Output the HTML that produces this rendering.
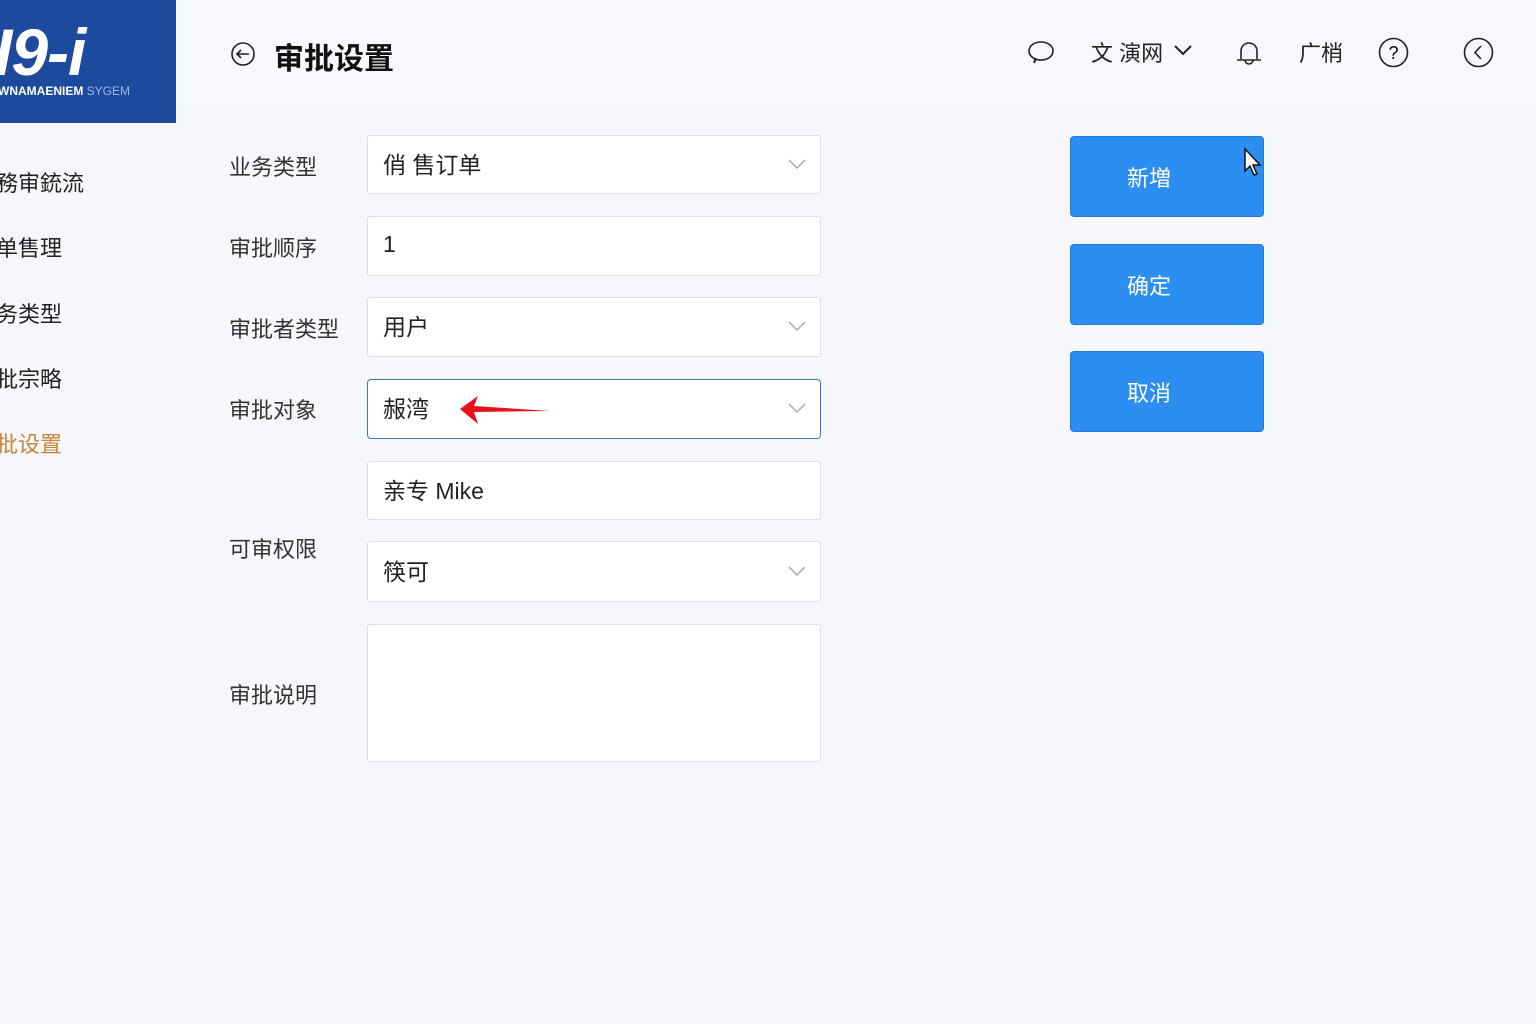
<!DOCTYPE html>
<html><head><meta charset="utf-8"><style>
body{margin:0;width:1536px;height:1024px;background:#f5f7fb;font-family:"Liberation Sans","Noto Sans CJK SC",sans-serif;position:relative;overflow:hidden;color:#222}
.a{position:absolute}
.logo{left:0;top:0;width:176px;height:123px;background:#1d4a9c}
.side{font-size:22px;color:#222;left:-4px}
.lbl{left:229px;font-size:22px;color:#333}
.f{left:367px;width:454px;background:#fff;border:1px solid #dcdfe6;border-radius:3px;box-sizing:border-box;font-size:23px;padding-left:15px;padding-bottom:4px;display:flex;align-items:center}
.chev{position:absolute;right:14px;top:50%;margin-top:-6px}
.btn{left:1070px;width:194px;height:81px;background:#2b8ef0;border:1px solid #1d7ad8;border-radius:4px;box-sizing:border-box;color:#fff;font-size:22px;display:flex;align-items:center;justify-content:center;padding-right:36px}
.top{font-size:22px;top:36px}
</style></head><body>
<div class="a logo">
<div class="a" style="left:-6px;top:14px;color:#fff;font-size:66px;font-weight:bold;font-style:italic;letter-spacing:-1px">I9-i</div>
<div class="a" style="left:-2px;top:84px;color:#fff;font-size:12px;font-weight:bold">WNAMAENIEM <span style="color:#9fb8e8;font-weight:normal">SYGEM</span></div>
</div>
<div class="a" style="left:176px;top:0;width:1360px;height:104px;background:#f7f8fc"></div>
<svg class="a" style="left:230px;top:41px" width="26" height="26" viewBox="0 0 26 26"><circle cx="13" cy="13" r="11" fill="none" stroke="#222" stroke-width="1.6"/><path d="M19 13H7M11 9l-4 4 4 4" fill="none" stroke="#222" stroke-width="1.6"/></svg>
<div class="a" style="left:274px;top:34px;font-size:30px;font-weight:600;color:#111">审批设置</div>
<svg class="a" style="left:1026px;top:38px" width="30" height="30" viewBox="0 0 30 30"><path d="M8 25l1-4C5 19 3 16 3 13 3 8 8 4 15 4s12 4 12 9-5 9-12 9c-2 0-4 0-5-1z" fill="none" stroke="#222" stroke-width="1.6"/></svg>
<div class="a top" style="left:1091px">文 演网</div>
<svg class="a" style="left:1173px;top:44px" width="20" height="14"><path d="M2 2l8 8 8-8" fill="none" stroke="#222" stroke-width="2"/></svg>
<svg class="a" style="left:1235px;top:38px" width="28" height="28" viewBox="0 0 28 28"><path d="M6 21V13a8 8 0 0 1 16 0v8M2 22h24M10 22a4 4 0 0 0 8 0" fill="none" stroke="#222" stroke-width="1.6"/></svg>
<div class="a top" style="left:1299px">广梢</div>
<svg class="a" style="left:1378px;top:37px" width="31" height="31"><circle cx="15.5" cy="15.5" r="14" fill="none" stroke="#222" stroke-width="1.6"/><text x="15.5" y="22" text-anchor="middle" font-size="18" font-family="Liberation Sans">?</text></svg>
<svg class="a" style="left:1463px;top:37px" width="31" height="31"><circle cx="15.5" cy="15.5" r="14" fill="none" stroke="#222" stroke-width="1.6"/><path d="M18 9l-6 6.5 6 6.5" fill="none" stroke="#222" stroke-width="1.6"/></svg>

<div class="a side" style="top:166px">務审銃流</div>
<div class="a side" style="top:231px">单售理</div>
<div class="a side" style="top:297px">务类型</div>
<div class="a side" style="top:362px">批宗略</div>
<div class="a side" style="top:427px;color:#c8843a">批设置</div>

<div class="a lbl" style="top:150px">业务类型</div>
<div class="a lbl" style="top:231px">审批顺序</div>
<div class="a lbl" style="top:312px">审批者类型</div>
<div class="a lbl" style="top:393px">审批对象</div>
<div class="a lbl" style="top:532px">可审权限</div>
<div class="a lbl" style="top:678px">审批说明</div>

<svg width="0" height="0" style="position:absolute"><defs><g id="cv"><path d="M1 1l8 8 8-8" fill="none" stroke="#aaa" stroke-width="1.5"/></g></defs></svg>
<div class="a f" style="top:135px;height:59px">俏 售订单<svg class="chev" width="18" height="11"><use href="#cv"/></svg></div>
<div class="a f" style="top:216px;height:60px">1</div>
<div class="a f" style="top:297px;height:60px">用户<svg class="chev" width="18" height="11"><use href="#cv"/></svg></div>
<div class="a f" style="top:379px;height:60px;border-color:#3a78c0;border-radius:4px">赧湾<svg class="chev" width="18" height="11"><use href="#cv"/></svg>
<svg class="a" style="left:90px;top:14px" width="95" height="32"><path d="M2 15L20 2l-4 10 76 5-76 1 4 12z" fill="#e8101a"/></svg></div>
<div class="a f" style="top:461px;height:59px">亲专 Mike</div>
<div class="a f" style="top:541px;height:61px">筷可<svg class="chev" width="18" height="11"><use href="#cv"/></svg></div>
<div class="a f" style="top:624px;height:138px"></div>

<div class="a btn" style="top:136px">新増</div>
<div class="a btn" style="top:244px">确定</div>
<div class="a btn" style="top:351px">取消</div>
<svg class="a" style="left:1243px;top:147px" width="20" height="30"><path d="M2 2v22l5-5 4 9 3-1-4-9h7z" fill="#fff" stroke="#111" stroke-width="1.5"/></svg>
</body></html>
